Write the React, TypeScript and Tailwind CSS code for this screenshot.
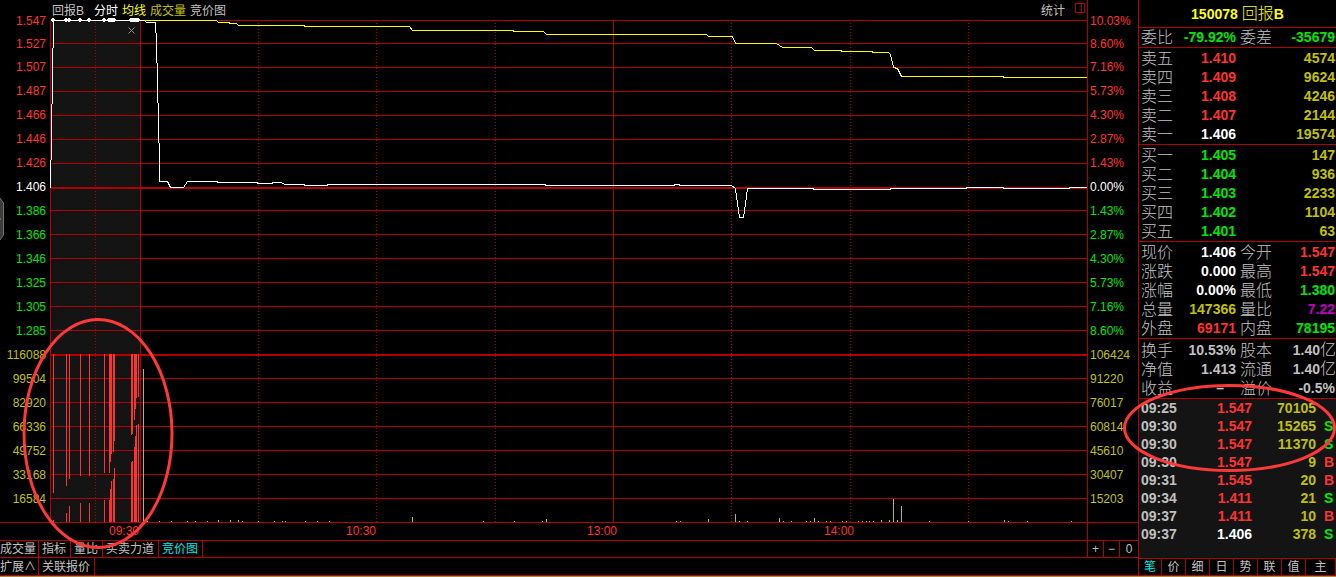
import React from "react";

const RED = "#b00000";

const TEXT = {
  red: "text-[#ff3232]",
  green: "text-[#00e600]",
  yellow: "text-[#c0c000]",
  white: "text-white",
  gray: "text-[#c0c0c0]",
  magenta: "text-[#c000c0]",
};
type Tone = keyof typeof TEXT;

const priceScale = [
  "1.547", "1.527", "1.507", "1.487", "1.466", "1.446", "1.426", "1.406",
  "1.386", "1.366", "1.346", "1.325", "1.305", "1.285",
];
const percentScale = [
  "10.03%", "8.60%", "7.16%", "5.73%", "4.30%", "2.87%", "1.43%", "0.00%",
  "1.43%", "2.87%", "4.30%", "5.73%", "7.16%", "8.60%",
];
const volumeScaleLeft = ["116088", "99504", "82920", "66336", "49752", "33168", "16584"];
const volumeScaleRight = ["106424", "91220", "76017", "60814", "45610", "30407", "15203"];

function scaleTone(i: number): Tone {
  if (i < 7) return "red";
  if (i === 7) return "white";
  return i < 14 ? "green" : "yellow";
}

function Scale({ values, align }: { values: string[]; align: "left" | "right" }) {
  return (
    <ul
      className={
        align === "right"
          ? "w-[50px] shrink-0 pt-[9px] pr-1 text-right"
          : "w-[51px] shrink-0 border-l border-[#b00000] pt-[9px] pl-[2px] text-left"
      }
    >
      {values.map((v, i) => (
        <li
          key={i}
          className={`flex items-center ${align === "right" ? "justify-end" : ""} ${
            i === 1 ? "h-[22px]" : "h-6"
          } ${TEXT[scaleTone(i)]}`}
        >
          {v}
        </li>
      ))}
    </ul>
  );
}

const gridLines = [
  20, 43, 67, 91, 115, 139, 163, 210, 234, 258, 282, 306, 330, 378, 402, 426, 450, 474, 498,
];
const dottedLines = [95, 258, 376, 495, 731, 850, 968];
const trades = [53, 66, 69, 80, 89, 104, 109, 111, 113, 114, 131, 133, 135, 137, 138];

/* x, end of the upper bar, start of the lower bar */
const auctionBars = [
  [53, 493, 520], [66, 486, 513], [69, 479, 506], [80, 476, 503], [89, 476, 503],
  [104, 473, 500], [109, 473, 500], [110, 462, 489], [111, 454, 481], [113, 452, 479],
  [114, 441, 468], [131, 435, 462], [132, 434, 461], [134, 420, 447], [135, 409, 436],
  [136, 398, 425], [138, 397, 424],
];

/* x, height */
const volumeBars = [
  [143, 153], [147, 1], [159, 1], [171, 1], [187, 1], [195, 1], [207, 1], [218, 2], [230, 2],
  [238, 2], [242, 1], [258, 1], [274, 1], [282, 1], [285, 1], [305, 1], [317, 1], [329, 1],
  [412, 5], [483, 1], [514, 1], [542, 1], [546, 3], [676, 1], [680, 1], [708, 3], [735, 8],
  [739, 1], [747, 1], [779, 4], [783, 1], [791, 1], [806, 1], [810, 1], [814, 4], [818, 1],
  [826, 1], [830, 1], [842, 1], [846, 1], [858, 1], [862, 1], [866, 1], [869, 1], [873, 1],
  [881, 2], [889, 2], [893, 23], [897, 2], [901, 16], [929, 1], [968, 1], [1004, 2],
  [1008, 1], [1027, 1], [1071, 1],
];

const averageLine =
  "144,20 216,20 218,22 229,22 229,23 236,23 238,25 304,25 304,26 409,26 412,30 513,30 513,31 543,31 546,34 706,34 708,36 732,36 735,43 776,43 782,47 811,47 814,50 841,50 841,51 872,51 872,52 888,52 890,54 893,67 897,68 901,76 1003,76 1003,77 1086,77";
const priceLine =
  "50,187 50,160 51,159 51,104 52,103 52,48 53,47 53,20 144,20 146,22 155,22 156,42 157,82 158,122 159,162 159,181 167,181 170,187 183,187 187,181 217,181 217,182 257,182 257,183 272,183 272,182 281,182 284,184 304,184 304,185 327,185 327,184 545,184 545,185 674,185 674,184 679,184 679,185 731,185 735,188 736,196 739,217 743,217 746,196 747,188 813,188 813,189 890,189 890,188 966,188 966,187 1003,187 1003,188 1069,188 1069,187 1086,187";

function Chart() {
  return (
    <svg
      viewBox="50 20 1037 502"
      preserveAspectRatio="none"
      shapeRendering="crispEdges"
      className="block h-[502px] w-full overflow-visible"
      aria-label="分时走势"
    >
      <rect x={51} y={21} width={89} height={501} fill="#141414" />
      {dottedLines.map((x) => (
        <path key={x} d={`M${x + 0.5} 23V522`} stroke={RED} strokeDasharray="1 2" />
      ))}
      {gridLines.map((y) => (
        <rect key={y} x={50} y={y} width={1037} height={1} fill={RED} />
      ))}
      <rect x={50} y={187} width={1037} height={2} fill={RED} />
      <rect x={50} y={354} width={1037} height={2} fill={RED} />
      {[50, 140, 613].map((x) => (
        <rect key={x} x={x} y={20} width={1} height={502} fill={RED} />
      ))}
      {auctionBars.map(([x, a, b]) => (
        <path key={x} d={`M${x} 354h1V${a}h-1zM${x} ${b}h1V522h-1z`} fill="#ff3232" />
      ))}
      {volumeBars.map(([x, h]) => (
        <rect key={x} x={x} y={522 - h} width={1} height={h} fill="#c0c000" />
      ))}
      <g transform="translate(0.5 0.5)" fill="none">
        <polyline points={averageLine} stroke="#ffff00" />
        <polyline points={priceLine} stroke="#ffffff" />
      </g>
      {trades.map((x) => (
        <path key={x} d={`M${x - 1} 19v-1h2v1h1v2h-1v1h-2v-1h-1v-2z`} fill="#fff" />
      ))}
    </svg>
  );
}

function Tab({ children, active = false }: { children: React.ReactNode; active?: boolean }) {
  return (
    <button
      type="button"
      className={`flex h-full items-center border-r border-[#b00000] pr-1 pl-[3px] first:pr-0.5 first:pl-0 ${
        active ? "text-[#00e6e6]" : "text-[#c0c0c0]"
      }`}
    >
      {children}
    </button>
  );
}

type Cell = [string, string, Tone];

function Block({ rows }: { rows: Cell[][] }) {
  return (
    <table className="w-full table-fixed border-b border-[#b00000]">
      <colgroup>
        <col className="w-[40px]" />
        <col className="w-[57px]" />
        <col className="w-[38px]" />
        <col />
      </colgroup>
      <tbody>
        {rows.map((row, i) => (
          <tr key={i} className="h-[19px]">
            {row.map(([label, value, tone], j) => (
              <React.Fragment key={j}>
                <th
                  scope="row"
                  className={`p-0 text-left text-base leading-[19px] font-light whitespace-nowrap text-[#c0c0c0] ${
                    j === 0 ? "pl-0.5" : "pl-1"
                  }`}
                >
                  {label}
                </th>
                <td
                  className={`p-0 text-right text-sm leading-[19px] font-bold whitespace-nowrap ${TEXT[tone]} ${
                    value === "–" ? "pr-3" : value.endsWith("亿") ? "" : j === 1 ? "pr-px" : ""
                  }`}
                >
                  {value.replace("亿", "")}
                  {value.endsWith("亿") && (
                    <span className="text-base leading-none font-light">亿</span>
                  )}
                </td>
              </React.Fragment>
            ))}
          </tr>
        ))}
      </tbody>
    </table>
  );
}

const sells: Cell[][] = [
  [["卖五", "1.410", "red"], ["", "4574", "yellow"]],
  [["卖四", "1.409", "red"], ["", "9624", "yellow"]],
  [["卖三", "1.408", "red"], ["", "4246", "yellow"]],
  [["卖二", "1.407", "red"], ["", "2144", "yellow"]],
  [["卖一", "1.406", "white"], ["", "19574", "yellow"]],
];
const buys: Cell[][] = [
  [["买一", "1.405", "green"], ["", "147", "yellow"]],
  [["买二", "1.404", "green"], ["", "936", "yellow"]],
  [["买三", "1.403", "green"], ["", "2233", "yellow"]],
  [["买四", "1.402", "green"], ["", "1104", "yellow"]],
  [["买五", "1.401", "green"], ["", "63", "yellow"]],
];
const quotes: Cell[][] = [
  [["现价", "1.406", "white"], ["今开", "1.547", "red"]],
  [["涨跌", "0.000", "white"], ["最高", "1.547", "red"]],
  [["涨幅", "0.00%", "white"], ["最低", "1.380", "green"]],
  [["总量", "147366", "yellow"], ["量比", "7.22", "magenta"]],
  [["外盘", "69171", "red"], ["内盘", "78195", "green"]],
];
const facts: Cell[][] = [
  [["换手", "10.53%", "gray"], ["股本", "1.40亿", "gray"]],
  [["净值", "1.413", "gray"], ["流通", "1.40亿", "gray"]],
  [["收益", "–", "gray"], ["溢价", "-0.5%", "gray"]],
];
const ticks: [string, string, Tone, string, string][] = [
  ["09:25", "1.547", "red", "70105", ""],
  ["09:30", "1.547", "red", "15265", "S"],
  ["09:30", "1.547", "red", "11370", "S"],
  ["09:30", "1.547", "red", "9", "B"],
  ["09:31", "1.545", "red", "20", "B"],
  ["09:34", "1.411", "red", "21", "S"],
  ["09:37", "1.411", "red", "10", "B"],
  ["09:37", "1.406", "white", "378", "S"],
];
const sideTabs = ["笔", "价", "细", "日", "势", "联", "值", "主"];

function QuotePanel() {
  return (
    <aside className="flex w-[198px] shrink-0 flex-col border-l border-[#b00000]">
      <h1 className="flex h-7 items-center justify-center gap-1 border-b border-[#b00000] text-[#ffff00]">
        <span className="text-sm font-bold">150078</span>
        <span className="text-base font-light">
          回报<b className="text-sm font-bold">B</b>
        </span>
      </h1>
      <Block rows={[[["委比", "-79.92%", "green"], ["委差", "-35679", "green"]]]} />
      <div className="pt-px"><Block rows={sells} /></div>
      <div className="pt-px"><Block rows={buys} /></div>
      <div className="pt-px"><Block rows={quotes} /></div>
      <div className="pt-0.5"><Block rows={facts} /></div>
      <div className="flex-1 bg-[#141414]">
        <table className="w-full table-fixed text-sm leading-[18px] font-bold">
          <colgroup>
            <col className="w-[50px]" />
            <col className="w-[63px]" />
            <col className="w-[64px]" />
            <col />
          </colgroup>
          <tbody>
            {ticks.map(([time, price, tone, vol, side], i) => (
              <tr key={i} className="h-[18px]">
                <td className="p-0 pl-0.5 text-[#c0c0c0]">{time}</td>
                <td className={`p-0 text-right ${TEXT[tone]}`}>{price}</td>
                <td className="p-0 text-right text-[#c0c000]">{vol}</td>
                <td className={`p-0 pl-2 ${side === "S" ? TEXT.green : TEXT.red}`}>{side}</td>
              </tr>
            ))}
          </tbody>
        </table>
      </div>
      <nav className="flex h-[17px] border-t border-[#b00000] text-xs">
        {sideTabs.map((t, i) => (
          <button
            key={t}
            type="button"
            className={`flex items-center justify-center border-r border-[#b00000] ${
              i === 0
                ? "w-[23px] text-[#00e6e6]"
                : i === 7
                  ? "flex-1 text-[#c0c0c0]"
                  : "w-6 text-[#c0c0c0]"
            }`}
          >
            {t}
          </button>
        ))}
      </nav>
    </aside>
  );
}

export default function App() {
  return (
    <div className="relative flex min-h-screen flex-col overflow-hidden bg-black font-['Liberation_Sans','Noto_Sans_CJK_SC',sans-serif] text-xs leading-4">
      <div className="flex flex-1">
        <main className="flex min-w-0 flex-1 flex-col">
          <div className="flex">
            <Scale values={[...priceScale, ...volumeScaleLeft]} align="right" />
            <section className="relative min-w-0 flex-1">
              <header className="flex h-5 items-center px-0.5 pt-0.5 text-[#c0c0c0]">
                <span className="mr-2.5">回报B</span>
                <nav className="flex gap-1">
                  <button type="button" className="text-white">分时</button>
                  <button type="button" className="text-[#ffff00]">均线</button>
                  <button type="button" className="text-[#c0c000]">成交量</button>
                  <button type="button">竞价图</button>
                </nav>
                <button type="button" className="mr-2.5 ml-auto">统计</button>
                <button type="button" aria-label="侧栏" className="mb-1.5">
                  <svg width="10" height="10" shapeRendering="crispEdges" fill="none" stroke="#b00000">
                    <path d="M.5.5h9v9h-9zM6.5 0v10" />
                  </svg>
                </button>
              </header>
              <Chart />
              <button type="button" aria-label="关闭" className="absolute top-[27px] left-[7.5%]">
                <svg width="7" height="7" viewBox="0 0 7 7" stroke="#909090">
                  <path d="M.5.5l6 6M6.5.5l-6 6" />
                </svg>
              </button>
            </section>
            <Scale values={[...percentScale, ...volumeScaleRight]} align="left" />
          </div>

          <div className="flex h-[18px] border-t border-[#b00000] text-[#ff3232]">
            <div className="ml-[50px] grid flex-1 grid-cols-[59fr_237fr_241fr_237fr_263fr] items-start">
              <time className="col-start-2">09:30</time>
              <time>10:30</time>
              <time>13:00</time>
              <time>14:00</time>
            </div>
            <div className="w-[51px] border-l border-[#b00000]" />
          </div>

          <div className="flex h-[17px] border-t border-[#b00000]">
            <nav className="flex flex-1">
              <Tab>成交量</Tab>
              <Tab>指标</Tab>
              <Tab>量比</Tab>
              <Tab>买卖力道</Tab>
              <Tab active>竞价图</Tab>
            </nav>
            <div className="flex w-[51px] border-l border-[#b00000] text-[#c0c0c0]">
              <button type="button" className="w-4 border-r border-[#b00000]">+</button>
              <button type="button" className="w-4 border-r border-[#b00000]">−</button>
              <button type="button" className="flex-1">0</button>
            </div>
          </div>
          <nav className="flex h-[18px] border-t border-[#b00000]">
            <Tab>扩展∧</Tab>
            <Tab>关联报价</Tab>
          </nav>
        </main>
        <QuotePanel />
      </div>
      <div className="h-0.5 border-t border-[#b00000] bg-[#b08840]" />

      <button type="button" aria-label="展开" className="absolute top-[197px] left-0">
        <svg width="5" height="44" viewBox="0 0 5 44">
          <path d="M0 1L3.5 6V38L0 43" fill="#3c3c3c" stroke="#707070" />
          <path d="M0 22h1" stroke="#d09020" />
        </svg>
      </button>
      <svg
        className="pointer-events-none absolute top-[317px] left-[21px]"
        width="154" height="233" fill="none" stroke="#ff3838" strokeWidth="3" aria-hidden="true"
      >
        <ellipse cx="77" cy="116.5" rx="74" ry="114" />
      </svg>
      <svg
        className="pointer-events-none absolute top-[383px] right-0"
        width="214" height="90" fill="none" stroke="#ff3838" strokeWidth="3" aria-hidden="true"
      >
        <ellipse cx="107.5" cy="45" rx="105" ry="42.5" />
      </svg>
    </div>
  );
}
